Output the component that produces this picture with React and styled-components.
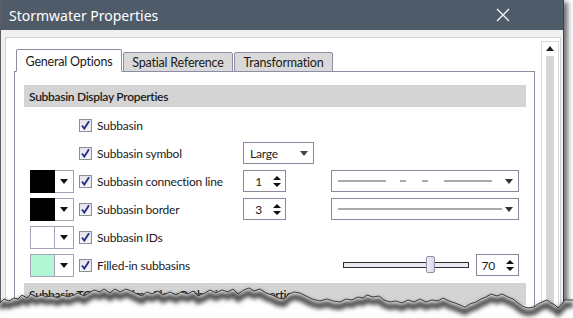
import React from 'react';
import styled, { createGlobalStyle } from 'styled-components';

const Global = createGlobalStyle`
  body {
    margin: 0;
    background: #fff;
    font-family: Lato, "Noto Sans", sans-serif;
  }
`;

const Frame = styled.div`
  position: relative;
  width: 573px;
  height: 318px;
  overflow: hidden;
  background: #fff;
`;

const Window = styled.div`
  width: 562px;
  height: 330px;
  border-left: 1px solid #5a5f66;
  border-right: 1px solid #3c4148;
  background: #f0f0f0;
  box-shadow: 4px 2px 5px rgba(0, 0, 0, 0.55);
  display: flex;
  flex-direction: column;
`;

const TitleBar = styled.div`
  height: 30px;
  flex: none;
  background: #505b6a;
  color: #fff;
  display: flex;
  align-items: center;
  justify-content: space-between;
  padding: 0 53px 0 8px;
  font-family: "Noto Sans", sans-serif;
  font-size: 14px;
`;

const Body = styled.div`
  flex: 1;
  padding: 7px 2px 0 4px;
  display: flex;
`;

const Panel = styled.div`
  flex: 1;
  background: #fff;
  border: 1px solid #cfcfd4;
  border-bottom: none;
  display: flex;
`;

const Main = styled.div`
  flex: 1;
  padding: 11px 6px 0 8px;
`;

const ScrollBox = styled.div`
  width: 16px;
  margin: 3px 1px 0 0;
  border: 1px solid #dadada;
  border-bottom: none;
  display: flex;
  flex-direction: column;
  align-items: center;
`;

const ScrollArrow = styled.div`
  margin-top: 4px;
  width: 0;
  height: 0;
  border-left: 4px solid transparent;
  border-right: 4px solid transparent;
  border-bottom: 5px solid #222;
`;

const ScrollTrack = styled.div`
  margin-top: 5px;
  width: 8px;
  flex: 1;
  background: #d6d6d6;
`;

const TabStrip = styled.div`
  display: flex;
  align-items: flex-end;
  padding-left: 2px;
  height: 23px;
  position: relative;
  z-index: 1;
`;

const Tab = styled.div`
  width: ${(p) => p.$w}px;
  height: ${(p) => (p.$active ? '23px' : '20px')};
  box-sizing: border-box;
  padding-top: ${(p) => (p.$active ? '2px' : '0')};
  margin-right: 1px;
  border: 1px solid #8e8ca3;
  border-bottom: ${(p) => (p.$active ? '1px solid #fff' : '1px solid #8e8ca3')};
  border-radius: 2px 2px 0 0;
  background: ${(p) => (p.$active ? '#fff' : '#d9d9d9')};
  font-size: 12.5px;
  letter-spacing: -0.2px;
  color: #1a1a1a;
  display: flex;
  align-items: center;
  justify-content: center;
`;

const TabPanel = styled.div`
  margin-top: -1px;
  border: 1px solid #8e8ca3;
  border-bottom: none;
  height: 260px;
  padding: 13px 8px 0 9px;
`;

const SectionHead = styled.div`
  height: 22px;
  background: #d4d4d4;
  font-size: 12px;
  font-weight: 600;
  letter-spacing: -0.3px;
  color: #1b1b1b;
  padding-left: 5px;
  display: flex;
  align-items: center;
  white-space: nowrap;
  overflow: hidden;
`;

const Rows = styled.div`
  padding: 4px 0;
`;

const Row = styled.div`
  height: 28px;
  display: grid;
  grid-template-columns: 49px 164px 88px 1fr;
  align-items: center;
  padding-left: 6px;
  font-size: 12px;
  letter-spacing: -0.2px;
  color: #1b1b1b;
`;

const Swatch = styled.div`
  width: 44px;
  height: 23px;
  box-sizing: border-box;
  border: 1px solid #a4a3b8;
  display: flex;
  background: #fff;
`;

const SwatchColor = styled.div`
  width: 23px;
  margin: -1px 0 -1px -1px;
  background: ${(p) => p.$color};
  border: 1px solid ${(p) => (p.$color === '#000' ? '#000' : '#a4a3b8')};
`;

const SwatchArrow = styled.div`
  flex: 1;
  display: flex;
  align-items: center;
  justify-content: center;
`;

const Tri = styled.div`
  width: 0;
  height: 0;
  border-left: ${(p) => p.$w || 4}px solid transparent;
  border-right: ${(p) => p.$w || 4}px solid transparent;
  ${(p) => (p.$up ? 'border-bottom' : 'border-top')}: ${(p) => p.$h || 5}px solid ${(p) => p.$c || '#111'};
`;

const Check = styled.label`
  display: flex;
  align-items: center;
  gap: 5px;
  white-space: nowrap;
`;

const Box = styled.span`
  width: 13px;
  height: 13px;
  box-sizing: border-box;
  border: 1px solid #8d8d94;
  background: linear-gradient(#e6e6ea, #f6f6f8);
  display: inline-flex;
  align-items: center;
  justify-content: center;
`;

const Select = styled.div`
  width: ${(p) => p.$w}px;
  height: 22px;
  box-sizing: border-box;
  border: 1px solid #8a889c;
  display: flex;
  align-items: center;
  justify-content: space-between;
  padding: 0 5px 0 6px;
  background: #fff;
`;

const Spin = styled.div`
  width: 43px;
  height: 22px;
  box-sizing: border-box;
  border: 1px solid #8a889c;
  display: flex;
  align-items: center;
  justify-content: flex-end;
  gap: 11px;
  padding-right: 4px;
  background: #fff;
`;

const SpinArrows = styled.div`
  display: flex;
  flex-direction: column;
  gap: 3px;
`;

const SliderWrap = styled.div`
  display: flex;
  align-items: center;
  padding-left: 12px;
  gap: 7px;
`;

const Track = styled.div`
  position: relative;
  width: 126px;
  height: 6px;
  box-sizing: border-box;
  border: 1px solid #2e2e2e;
  background: #e9e9f1;
`;

const Thumb = styled.div`
  position: absolute;
  left: 82px;
  top: -7px;
  width: 9px;
  height: 17px;
  box-sizing: border-box;
  border: 1px solid #8e8ea8;
  border-radius: 2px;
  background: linear-gradient(90deg, #eef0f7, #d5d8e6);
`;

const Torn = styled.svg`
  position: absolute;
  left: 0;
  bottom: 0;
`;

const tick = (
  <svg width="11" height="11" viewBox="0 0 11 11">
    <path d="M2 5.5 L4.3 8.6 L9 1.2" fill="none" stroke="#23308a" strokeWidth="1.8" />
  </svg>
);

const CheckItem = ({ label }) => (
  <Check>
    <Box>{tick}</Box>
    {label}
  </Check>
);

const ColorPick = ({ color }) => (
  <Swatch>
    <SwatchColor $color={color} />
    <SwatchArrow>
      <Tri $w={4} $h={5} />
    </SwatchArrow>
  </Swatch>
);

const Spinner = ({ value }) => (
  <Spin>
    <span>{value}</span>
    <SpinArrows>
      <Tri $up $w={4} $h={4} />
      <Tri $w={4} $h={4} />
    </SpinArrows>
  </Spin>
);

const LineSelect = ({ dashed }) => (
  <Select $w={188}>
    <svg width="166" height="4">
      {dashed ? (
        <g stroke="#555" strokeWidth="1">
          <line x1="0" y1="2" x2="48" y2="2" />
          <line x1="62" y1="2" x2="68" y2="2" />
          <line x1="84" y1="2" x2="90" y2="2" />
          <line x1="106" y1="2" x2="154" y2="2" />
        </g>
      ) : (
        <line x1="0" y1="2" x2="164" y2="2" stroke="#555" strokeWidth="1" />
      )}
    </svg>
    <Tri $w={4} $h={5} $c="#333" />
  </Select>
);

const edge = [
  [0, 303], [4, 299], [9, 301], [14, 298], [18, 299], [22, 295], [27, 298], [31, 294], [36, 297],
  [42, 295], [46, 297], [52, 296], [58, 298], [62, 295], [68, 297], [74, 295], [78, 293], [84, 296],
  [89, 293], [94, 290], [100, 292], [104, 289], [110, 293], [115, 289], [120, 292], [126, 289],
  [131, 291], [137, 294], [142, 296], [147, 292], [152, 294], [158, 291], [163, 295], [170, 292],
  [176, 295], [181, 292], [188, 294], [193, 291], [198, 296], [205, 293], [210, 290], [216, 293],
  [222, 290], [228, 292], [233, 289], [238, 294], [244, 290], [249, 288], [254, 291], [260, 289],
  [266, 293], [272, 295], [278, 298], [284, 299], [289, 294], [294, 292], [300, 293], [306, 296],
  [312, 299], [320, 301], [327, 299], [333, 301], [340, 302], [346, 299], [352, 300], [358, 297],
  [363, 298], [367, 295], [373, 297], [379, 296], [384, 300], [390, 302], [396, 301], [402, 303],
  [408, 300], [414, 302], [420, 299], [426, 302], [432, 300], [438, 301], [443, 298], [449, 301],
  [455, 303], [460, 305], [465, 307], [470, 304], [476, 302], [481, 299], [486, 297], [491, 294],
  [497, 296], [502, 294], [508, 297], [513, 299], [518, 303], [522, 306], [528, 308], [534, 307],
  [538, 304], [542, 302], [547, 300], [551, 303], [555, 305], [558, 308], [562, 304], [565, 300],
  [573, 300],
];
const top = 280;
const edgePath = edge.map(([x, y], i) => `${i ? 'L' : 'M'}${x} ${y - top}`).join(' ');

const App = () => (
  <Frame>
    <Global />
    <Window>
      <TitleBar>
        <span>Stormwater Properties</span>
        <svg width="14" height="14" viewBox="0 0 14 14">
          <path d="M1 1 L13 13 M13 1 L1 13" stroke="#fff" strokeWidth="1.2" />
        </svg>
      </TitleBar>
      <Body>
        <Panel>
          <Main>
            <TabStrip>
              <Tab $active $w={106}>General Options</Tab>
              <Tab $w={110}>Spatial Reference</Tab>
              <Tab $w={99}>Transformation</Tab>
            </TabStrip>
            <TabPanel>
              <SectionHead>Subbasin Display Properties</SectionHead>
              <Rows>
                <Row>
                  <span />
                  <CheckItem label="Subbasin" />
                </Row>
                <Row>
                  <span />
                  <CheckItem label="Subbasin symbol" />
                  <Select $w={71}>
                    <span>Large</span>
                    <Tri $w={4} $h={5} $c="#444" />
                  </Select>
                </Row>
                <Row>
                  <ColorPick color="#000" />
                  <CheckItem label="Subbasin connection line" />
                  <Spinner value="1" />
                  <LineSelect dashed />
                </Row>
                <Row>
                  <ColorPick color="#000" />
                  <CheckItem label="Subbasin border" />
                  <Spinner value="3" />
                  <LineSelect />
                </Row>
                <Row>
                  <ColorPick color="#fff" />
                  <CheckItem label="Subbasin IDs" />
                </Row>
                <Row>
                  <ColorPick color="#b1f7d6" />
                  <CheckItem label="Filled-in subbasins" />
                  <span />
                  <SliderWrap>
                    <Track>
                      <Thumb />
                    </Track>
                    <Spinner value="70" />
                  </SliderWrap>
                </Row>
              </Rows>
              <SectionHead>Subbasin TOC/Lag Time Flow Path Display Properties</SectionHead>
            </TabPanel>
          </Main>
          <ScrollBox>
            <ScrollArrow />
            <ScrollTrack />
          </ScrollBox>
        </Panel>
      </Body>
    </Window>
    <Torn width="573" height="38" viewBox="0 0 573 38">
      <defs>
        <filter id="blur" x="-5%" y="-50%" width="110%" height="200%">
          <feGaussianBlur stdDeviation="2.2" />
        </filter>
      </defs>
      <path d={`${edgePath} L573 38 L0 38 Z`} fill="#fff" />
      <path d={edgePath} transform="translate(0 5)" fill="none" stroke="#4a4a4a" strokeWidth="6" filter="url(#blur)" />
      <path d={edgePath} fill="none" stroke="#3a3a3a" strokeWidth="1" />
    </Torn>
  </Frame>
);

export default App;
